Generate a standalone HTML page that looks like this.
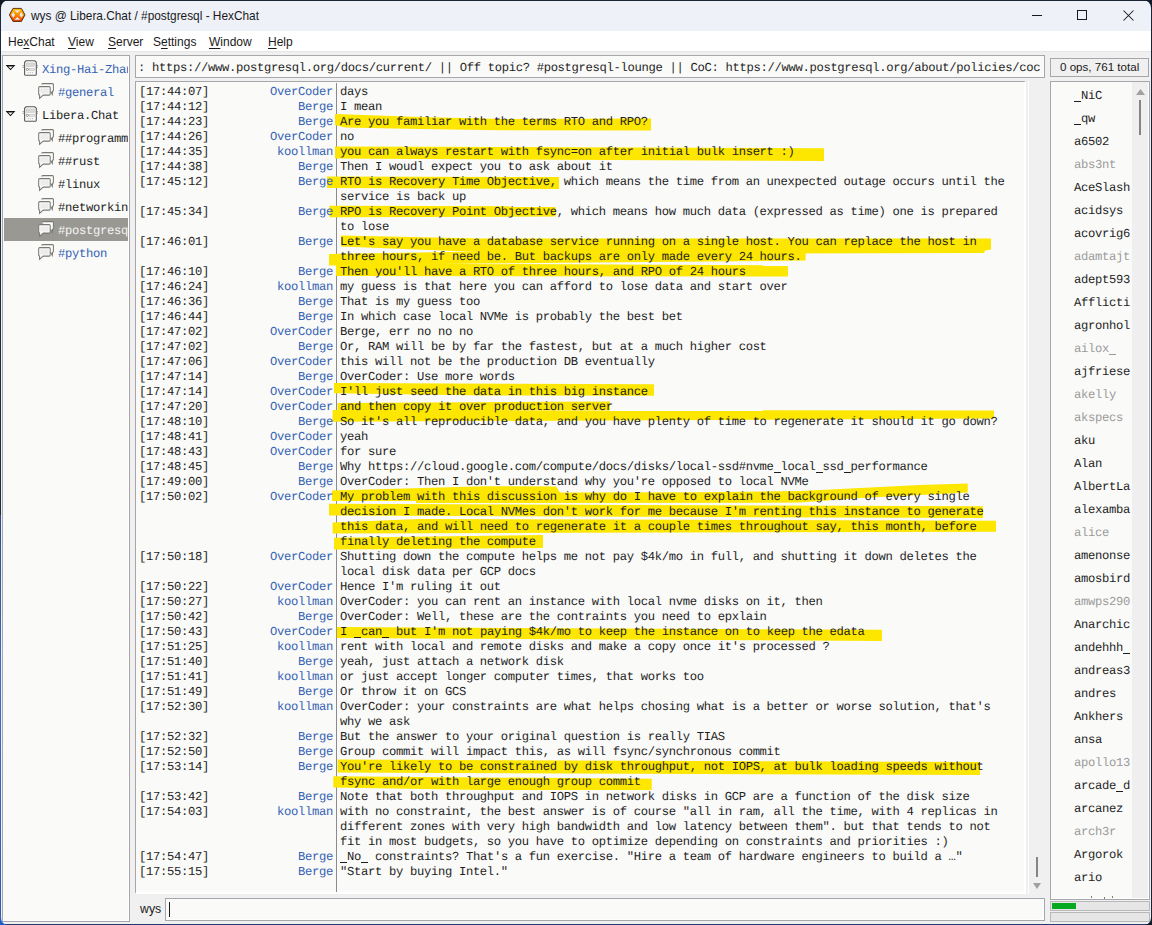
<!DOCTYPE html>
<html><head><meta charset="utf-8">
<style>
html,body{margin:0;padding:0;width:1152px;height:925px;overflow:hidden;background:linear-gradient(to bottom,#0f1826 0,#0f1826 700px,#1a4fb0 925px);}
*{box-sizing:border-box;}
#win{position:absolute;left:0;top:0;width:1152px;height:925px;background:#f0f0f0;overflow:hidden;}
#frame{position:absolute;left:0;top:0;width:1152px;height:925px;border:1px solid #1b2533;border-left-color:#1f2a40;border-bottom-color:#233a6e;pointer-events:none;}
.abs{position:absolute;}
#title{position:absolute;left:0;top:0;width:1152px;height:31px;background:#eef1f8;}
#title .t{position:absolute;left:31px;top:9px;font:11.85px "Liberation Sans",sans-serif;color:#1a1a1a;white-space:nowrap;}
#menu{position:absolute;left:0;top:31px;width:1152px;height:21px;background:#fff;border-bottom:1px solid #e6e6e6;}
#menu span{position:absolute;top:4px;font:12px "Liberation Sans",sans-serif;color:#1a1a1a;white-space:nowrap;}
#menu u{text-decoration:underline;text-decoration-thickness:1px;text-underline-offset:1.5px;}
.panel{position:absolute;background:#fafaf9;border:1px solid #a6a6ab;}
.mono{font-family:"Liberation Mono",monospace;}
.ts,.nk,.msg{position:absolute;height:15px;line-height:15px;white-space:pre;font-family:"Liberation Mono",monospace;font-size:12.2px;letter-spacing:-0.32px;text-rendering:geometricPrecision;color:#1e1e1e;}
.ts{left:139px;}
.nk{right:calc(1152px - 333px);color:#3562b2;text-align:right;}
.msg{left:340px;}
.un{position:absolute;left:23px;height:18px;line-height:18px;white-space:pre;font-family:"Liberation Mono",monospace;font-size:12.2px;letter-spacing:-0.32px;text-rendering:geometricPrecision;color:#1e1e1e;}
.un.aw{color:#9a9a9a;}
.tree{position:absolute;height:18px;line-height:18px;white-space:pre;font-family:"Liberation Mono",monospace;font-size:12.2px;letter-spacing:-0.32px;text-rendering:geometricPrecision;color:#1e1e1e;}
.hl{position:absolute;background:#fde600;}
.us{display:inline-block;width:7px;height:15px;vertical-align:top;background:linear-gradient(currentColor,currentColor) no-repeat 0 12px/7px 1px;}
.un .us{height:18px;background-position:0 14px;}
</style></head><body>
<svg width="0" height="0" style="position:absolute">
 <defs>
  <g id="srvicon">
   <path d="M6.1 1.8H14.8L16.3 3.3V15.6Q16.3 16.2 15.7 16.2H5.2Q4.6 16.2 4.6 15.6V3.3Z" fill="#fbfbfb" stroke="#5a5a5a" stroke-width="1.1"/>
   <rect x="6.4" y="4" width="8" height="3.3" fill="#d8d8d8" stroke="#c4c4c4" stroke-width="0.6"/>
   <circle cx="7.4" cy="10.4" r="1.1" fill="none" stroke="#777" stroke-width="0.8"/>
   <rect x="9.4" y="9.4" width="5" height="2" fill="#e2e2e2" stroke="#c0c0c0" stroke-width="0.6"/>
   <path d="M8.2 13.2V14.2M10.3 13.2V14.2M12.4 13.2V14.2" stroke="#aaa" stroke-width="0.9"/>
   <path d="M2.6 6.6H4.1M2.6 8.3H4.1M16.8 6.6H18M16.8 8.3H18" stroke="#777" stroke-width="0.7"/>
  </g>
  <g id="chicon">
   <path d="M5.7 2.6Q5.7 1.6 6.7 1.6H16.4Q17.4 1.6 17.4 2.6V8.2Q17.4 9.2 16.6 9.2L16.3 12.4L14.6 9.2" fill="#fdfdfd" stroke="#7a7a72" stroke-width="1.05"/>
   <path d="M2.7 5.6Q2.7 4.6 3.7 4.6H13.2Q14.2 4.6 14.2 5.6V12.1Q14.2 13.1 13.2 13.1H7.2L3.6 16.4L3.6 13.1Q2.7 13.1 2.7 12.1Z" fill="#fdfdfd" stroke="#7a7a72" stroke-width="1.05"/>
   <rect x="4.3" y="6.3" width="8.3" height="5.2" fill="#ececec"/>
  </g>
 </defs>
</svg>
<div id="win">
 <div id="title">
  <svg class="abs" style="left:8px;top:7px" width="18" height="16" viewBox="8 7 18 16">
   <defs><linearGradient id="og" x1="0" y1="0" x2="0" y2="1"><stop offset="0" stop-color="#ffc400"/><stop offset="0.45" stop-color="#ff9000"/><stop offset="1" stop-color="#f03800"/></linearGradient></defs>
   <polygon points="13,8.4 21.4,8.4 25,14.9 21.4,21.4 13,21.4 9.4,14.9" fill="url(#og)" stroke="#4a2200" stroke-width="0.9"/>
   <polygon points="14.3,10.2 20.3,10.2 17.3,13" fill="#e2e8f0"/>
   <polygon points="14.3,19.7 20.3,19.7 17.3,16.9" fill="#e2e8f0"/>
   <polygon points="11.3,14.9 13.4,12.1 15,14.9 13.4,17.7" fill="#e2e8f0"/>
   <polygon points="23.2,14.9 21.1,12.1 19.5,14.9 21.1,17.7" fill="#e2e8f0"/>
  </svg>
  <div class="t">wys @ Libera.Chat / #postgresql - HexChat</div>
  <!-- window controls -->
  <div class="abs" style="left:1032px;top:15px;width:10px;height:1px;background:#1a1a1a"></div>
  <div class="abs" style="left:1077px;top:10px;width:10px;height:10px;border:1px solid #1a1a1a"></div>
  <svg class="abs" style="left:1123px;top:10px" width="11" height="11" viewBox="0 0 11 11"><path d="M0.5 0.5L10.5 10.5M10.5 0.5L0.5 10.5" stroke="#1a1a1a" stroke-width="1.05"/></svg>
 </div>
 <div id="menu">
  <span style="left:8px">He<u>x</u>Chat</span>
  <span style="left:68px"><u>V</u>iew</span>
  <span style="left:108px"><u>S</u>erver</span>
  <span style="left:153px">S<u>e</u>ttings</span>
  <span style="left:209px"><u>W</u>indow</span>
  <span style="left:268px"><u>H</u>elp</span>
 </div>

 <!-- left tree -->
 <div class="abs" style="left:2px;top:55px;width:128px;height:867px;background:#fafaf9;border:1px solid #a6a6ab;"></div>
 <div class="abs" style="left:3px;top:56px;width:126px;height:865px;border-right:1px solid #fff;border-bottom:1px solid #fff;"></div>
 <div class="abs" style="left:3px;top:56px;width:125px;height:865px;overflow:hidden">
<svg class="abs" style="left:2px;top:7px" width="14" height="10" viewBox="0 0 14 10"><path d="M0.6 2.1H10.4L5.5 7.2ZM3.1 3.4L5.5 5.8L7.9 3.4Z" fill="#111" fill-rule="evenodd"/></svg>
<svg class="abs" style="left:17px;top:2.5px" width="20" height="18"><use href="#srvicon"/></svg>
<div class="tree" style="left:39px;top:5px;color:#3562b2">Xing-Hai-Zhan</div>
<svg class="abs" style="left:33px;top:26px" width="18" height="18"><use href="#chicon"/></svg>
<div class="tree" style="left:55px;top:28px;color:#3562b2">#general</div>
<svg class="abs" style="left:2px;top:53px" width="14" height="10" viewBox="0 0 14 10"><path d="M0.6 2.1H10.4L5.5 7.2ZM3.1 3.4L5.5 5.8L7.9 3.4Z" fill="#111" fill-rule="evenodd"/></svg>
<svg class="abs" style="left:17px;top:48.5px" width="20" height="18"><use href="#srvicon"/></svg>
<div class="tree" style="left:39px;top:51px;color:#1e1e1e">Libera.Chat</div>
<svg class="abs" style="left:33px;top:72px" width="18" height="18"><use href="#chicon"/></svg>
<div class="tree" style="left:55px;top:74px;color:#1e1e1e">##programming</div>
<svg class="abs" style="left:33px;top:95px" width="18" height="18"><use href="#chicon"/></svg>
<div class="tree" style="left:55px;top:97px;color:#1e1e1e">##rust</div>
<svg class="abs" style="left:33px;top:118px" width="18" height="18"><use href="#chicon"/></svg>
<div class="tree" style="left:55px;top:120px;color:#1e1e1e">#linux</div>
<svg class="abs" style="left:33px;top:141px" width="18" height="18"><use href="#chicon"/></svg>
<div class="tree" style="left:55px;top:143px;color:#1e1e1e">#networking</div>
<div class="abs" style="left:1px;top:162px;width:124px;height:23px;background:#9a9893"></div>
<svg class="abs" style="left:33px;top:164px" width="18" height="18"><use href="#chicon"/></svg>
<div class="tree" style="left:55px;top:166px;color:#f4f4f4">#postgresql</div>
<svg class="abs" style="left:33px;top:187px" width="18" height="18"><use href="#chicon"/></svg>
<div class="tree" style="left:55px;top:189px;color:#3562b2">#python</div>
</div>

 <!-- topic -->
 <div class="abs" style="left:135px;top:55px;width:910px;height:23px;background:#fafaf9;border:1px solid #a6a6ab;overflow:hidden">
  <div class="abs mono" style="left:2px;top:5px;white-space:pre;font-size:12.2px;letter-spacing:-0.32px;text-rendering:geometricPrecision;color:#1e1e1e;line-height:15px">: https://www.postgresql.org/docs/current/ || Off topic? #postgresql-lounge || CoC: https://www.postgresql.org/about/policies/coc</div>
 </div>
 <!-- ops -->
 <div class="abs" style="left:1050px;top:58px;width:99px;height:19px;background:#f0f0f0;border:1px solid #a6a6ab;"></div>
 <div class="abs" style="left:1060px;top:60px;font:11.6px 'Liberation Sans',sans-serif;color:#1a1a1a;white-space:nowrap">0 ops, 761 total</div>

 <!-- chat -->
 <div class="abs" style="left:135px;top:81px;width:891px;height:813px;background:#fafaf9;border-left:1px solid #a6a6ab;border-top:1px solid #a6a6ab;border-right:2px solid #fff;border-bottom:2px solid #fff;"></div>
 <div class="abs" style="left:1028px;top:81px;width:1px;height:813px;background:#fff"></div>
 <div class="abs" style="left:336px;top:83px;width:1px;height:809px;background:#8a8a90"></div>
 <svg class="abs" style="left:0;top:0" width="1152" height="925"><g fill="#fde600">
 <polygon points="335,114 420,117 500,119 651,118.4 651,130.5 500,130.3 420,129 345,127.5 335,125"/>
 <polygon points="335,146.4 824,148.3 824,161 335,158.5"/>
 <polygon points="327,176.5 559,177 559,189 327,188"/>
 <polygon points="329.5,205.8 555.5,206.3 555.5,216.5 329.5,217.3"/>
 <polygon points="341,235.6 480,238.4 991,238.6 991,249.6 985,250.5 984,253 700,253.5 480,252 341,246.5"/>
 <polygon points="329,254 480,251.5 805.6,249.6 805.6,260.6 480,263.5 329,265.5"/>
 <polygon points="336,263.4 788,265.3 788,276.6 336,276"/>
 <polygon points="334,382.9 654,384.25 654,395.8 485,395.4 334,393.3"/>
 <polygon points="337.5,403 610,401.6 610,410.5 337.5,411"/>
 <polygon points="332.6,410 994,410.5 994,418.6 332.6,421.7"/>
 <polygon points="332,490.5 485,486.3 556,486.5 560,492.5 700,492.3 800,491 860,488 920,485 967.7,483.5 967.7,492.6 930,494.5 860,498 800,502.6 416,503 416,501 332,501"/>
 <polygon points="329,503.7 983,506.3 983,518.1 329,515.5"/>
 <polygon points="332.6,522.4 420,519 996,520.8 996,531.8 560,532.7 332.6,533.5"/>
 <polygon points="334,537.7 543,535 543,548 334,549.5"/>
 <polygon points="336.8,627 882,629.8 882,641 336.8,638"/>
 <polygon points="337.5,759.6 980,762 980,775 337.5,772.5"/>
 <polygon points="333.3,776.3 651.7,778.7 651.7,790 485,790 333.3,787.4"/>
</g></svg>

 <div class="ts" style="top:85px">[17:44:07]</div>
<div class="nk" style="top:85px">OverCoder</div>
<div class="msg" style="top:85px">days</div>
<div class="ts" style="top:100px">[17:44:12]</div>
<div class="nk" style="top:100px">Berge</div>
<div class="msg" style="top:100px">I mean</div>
<div class="ts" style="top:115px">[17:44:23]</div>
<div class="nk" style="top:115px">Berge</div>
<div class="msg" style="top:115px">Are you familiar with the terms RTO and RPO?</div>
<div class="ts" style="top:130px">[17:44:26]</div>
<div class="nk" style="top:130px">OverCoder</div>
<div class="msg" style="top:130px">no</div>
<div class="ts" style="top:145px">[17:44:35]</div>
<div class="nk" style="top:145px">koollman</div>
<div class="msg" style="top:145px">you can always restart with fsync=on after initial bulk insert :)</div>
<div class="ts" style="top:160px">[17:44:38]</div>
<div class="nk" style="top:160px">Berge</div>
<div class="msg" style="top:160px">Then I woudl expect you to ask about it</div>
<div class="ts" style="top:175px">[17:45:12]</div>
<div class="nk" style="top:175px">Berge</div>
<div class="msg" style="top:175px">RTO is Recovery Time Objective, which means the time from an unexpected outage occurs until the</div>
<div class="msg" style="top:190px">service is back up</div>
<div class="ts" style="top:205px">[17:45:34]</div>
<div class="nk" style="top:205px">Berge</div>
<div class="msg" style="top:205px">RPO is Recovery Point Objective, which means how much data (expressed as time) one is prepared</div>
<div class="msg" style="top:220px">to lose</div>
<div class="ts" style="top:235px">[17:46:01]</div>
<div class="nk" style="top:235px">Berge</div>
<div class="msg" style="top:235px">Let's say you have a database service running on a single host. You can replace the host in</div>
<div class="msg" style="top:250px">three hours, if need be. But backups are only made every 24 hours.</div>
<div class="ts" style="top:265px">[17:46:10]</div>
<div class="nk" style="top:265px">Berge</div>
<div class="msg" style="top:265px">Then you'll have a RTO of three hours, and RPO of 24 hours</div>
<div class="ts" style="top:280px">[17:46:24]</div>
<div class="nk" style="top:280px">koollman</div>
<div class="msg" style="top:280px">my guess is that here you can afford to lose data and start over</div>
<div class="ts" style="top:295px">[17:46:36]</div>
<div class="nk" style="top:295px">Berge</div>
<div class="msg" style="top:295px">That is my guess too</div>
<div class="ts" style="top:310px">[17:46:44]</div>
<div class="nk" style="top:310px">Berge</div>
<div class="msg" style="top:310px">In which case local NVMe is probably the best bet</div>
<div class="ts" style="top:325px">[17:47:02]</div>
<div class="nk" style="top:325px">OverCoder</div>
<div class="msg" style="top:325px">Berge, err no no no</div>
<div class="ts" style="top:340px">[17:47:02]</div>
<div class="nk" style="top:340px">Berge</div>
<div class="msg" style="top:340px">Or, RAM will be by far the fastest, but at a much higher cost</div>
<div class="ts" style="top:355px">[17:47:06]</div>
<div class="nk" style="top:355px">OverCoder</div>
<div class="msg" style="top:355px">this will not be the production DB eventually</div>
<div class="ts" style="top:370px">[17:47:14]</div>
<div class="nk" style="top:370px">Berge</div>
<div class="msg" style="top:370px">OverCoder: Use more words</div>
<div class="ts" style="top:385px">[17:47:14]</div>
<div class="nk" style="top:385px">OverCoder</div>
<div class="msg" style="top:385px">I'll just seed the data in this big instance</div>
<div class="ts" style="top:400px">[17:47:20]</div>
<div class="nk" style="top:400px">OverCoder</div>
<div class="msg" style="top:400px">and then copy it over production server</div>
<div class="ts" style="top:415px">[17:48:10]</div>
<div class="nk" style="top:415px">Berge</div>
<div class="msg" style="top:415px">So it's all reproducible data, and you have plenty of time to regenerate it should it go down?</div>
<div class="ts" style="top:430px">[17:48:41]</div>
<div class="nk" style="top:430px">OverCoder</div>
<div class="msg" style="top:430px">yeah</div>
<div class="ts" style="top:445px">[17:48:43]</div>
<div class="nk" style="top:445px">OverCoder</div>
<div class="msg" style="top:445px">for sure</div>
<div class="ts" style="top:460px">[17:48:45]</div>
<div class="nk" style="top:460px">Berge</div>
<div class="msg" style="top:460px">Why https://cloud.google.com/compute/docs/disks/local-ssd#nvme<span class="us"></span>local<span class="us"></span>ssd<span class="us"></span>performance</div>
<div class="ts" style="top:475px">[17:49:00]</div>
<div class="nk" style="top:475px">Berge</div>
<div class="msg" style="top:475px">OverCoder: Then I don't understand why you're opposed to local NVMe</div>
<div class="ts" style="top:490px">[17:50:02]</div>
<div class="nk" style="top:490px">OverCoder</div>
<div class="msg" style="top:490px">My problem with this discussion is why do I have to explain the background of every single</div>
<div class="msg" style="top:505px">decision I made. Local NVMes don't work for me because I'm renting this instance to generate</div>
<div class="msg" style="top:520px">this data, and will need to regenerate it a couple times throughout say, this month, before</div>
<div class="msg" style="top:535px">finally deleting the compute</div>
<div class="ts" style="top:550px">[17:50:18]</div>
<div class="nk" style="top:550px">OverCoder</div>
<div class="msg" style="top:550px">Shutting down the compute helps me not pay $4k/mo in full, and shutting it down deletes the</div>
<div class="msg" style="top:565px">local disk data per GCP docs</div>
<div class="ts" style="top:580px">[17:50:22]</div>
<div class="nk" style="top:580px">OverCoder</div>
<div class="msg" style="top:580px">Hence I'm ruling it out</div>
<div class="ts" style="top:595px">[17:50:27]</div>
<div class="nk" style="top:595px">koollman</div>
<div class="msg" style="top:595px">OverCoder: you can rent an instance with local nvme disks on it, then</div>
<div class="ts" style="top:610px">[17:50:42]</div>
<div class="nk" style="top:610px">Berge</div>
<div class="msg" style="top:610px">OverCoder: Well, these are the contraints you need to epxlain</div>
<div class="ts" style="top:625px">[17:50:43]</div>
<div class="nk" style="top:625px">OverCoder</div>
<div class="msg" style="top:625px">I <span class="us"></span>can<span class="us"></span> but I'm not paying $4k/mo to keep the instance on to keep the edata</div>
<div class="ts" style="top:640px">[17:51:25]</div>
<div class="nk" style="top:640px">koollman</div>
<div class="msg" style="top:640px">rent with local and remote disks and make a copy once it's processed ?</div>
<div class="ts" style="top:655px">[17:51:40]</div>
<div class="nk" style="top:655px">Berge</div>
<div class="msg" style="top:655px">yeah, just attach a network disk</div>
<div class="ts" style="top:670px">[17:51:41]</div>
<div class="nk" style="top:670px">koollman</div>
<div class="msg" style="top:670px">or just accept longer computer times, that works too</div>
<div class="ts" style="top:685px">[17:51:49]</div>
<div class="nk" style="top:685px">Berge</div>
<div class="msg" style="top:685px">Or throw it on GCS</div>
<div class="ts" style="top:700px">[17:52:30]</div>
<div class="nk" style="top:700px">koollman</div>
<div class="msg" style="top:700px">OverCoder: your constraints are what helps chosing what is a better or worse solution, that's</div>
<div class="msg" style="top:715px">why we ask</div>
<div class="ts" style="top:730px">[17:52:32]</div>
<div class="nk" style="top:730px">Berge</div>
<div class="msg" style="top:730px">But the answer to your original question is really TIAS</div>
<div class="ts" style="top:745px">[17:52:50]</div>
<div class="nk" style="top:745px">Berge</div>
<div class="msg" style="top:745px">Group commit will impact this, as will fsync/synchronous commit</div>
<div class="ts" style="top:760px">[17:53:14]</div>
<div class="nk" style="top:760px">Berge</div>
<div class="msg" style="top:760px">You're likely to be constrained by disk throughput, not IOPS, at bulk loading speeds without</div>
<div class="msg" style="top:775px">fsync and/or with large enough group commit</div>
<div class="ts" style="top:790px">[17:53:42]</div>
<div class="nk" style="top:790px">Berge</div>
<div class="msg" style="top:790px">Note that both throughput and IOPS in network disks in GCP are a function of the disk size</div>
<div class="ts" style="top:805px">[17:54:03]</div>
<div class="nk" style="top:805px">koollman</div>
<div class="msg" style="top:805px">with no constraint, the best answer is of course "all in ram, all the time, with 4 replicas in</div>
<div class="msg" style="top:820px">different zones with very high bandwidth and low latency between them". but that tends to not</div>
<div class="msg" style="top:835px">fit in most budgets, so you have to optimize depending on constraints and priorities :)</div>
<div class="ts" style="top:850px">[17:54:47]</div>
<div class="nk" style="top:850px">Berge</div>
<div class="msg" style="top:850px"><span class="us"></span>No<span class="us"></span> constraints? That's a fun exercise. "Hire a team of hardware engineers to build a …"</div>
<div class="ts" style="top:865px">[17:55:15]</div>
<div class="nk" style="top:865px">Berge</div>
<div class="msg" style="top:865px">"Start by buying Intel."</div>
 <!-- chat scrollbar -->
 <div class="abs" style="left:1036px;top:857px;width:2px;height:20px;background:#858585"></div>
 <svg class="abs" style="left:1033px;top:883px" width="8" height="6"><polygon points="0,0 8,0 4,6" fill="#a0a0a0"/></svg>

 <!-- userlist -->
 <div class="abs" style="left:1050px;top:81px;width:100px;height:819px;background:#fafaf9;border:1px solid #a6a6ab;"></div>
 <div class="abs" style="left:1051px;top:82px;width:98px;height:817px;border-right:1px solid #fff;border-bottom:1px solid #fff;"></div>
 <div class="abs" style="left:1132px;top:82px;width:16px;height:816px;background:#efefef"></div>
 <svg class="abs" style="left:1135.5px;top:89px" width="9" height="6"><polygon points="0,6 9,6 4.5,0" fill="#a0a0a0"/></svg>
 <div class="abs" style="left:1139px;top:100px;width:2px;height:35px;background:#858585"></div>
 <div class="abs" style="left:1051px;top:82px;width:81px;height:816px;overflow:hidden">
 <div class="un" style="top:5px"><span class="us"></span>NiC</div>
<div class="un" style="top:28px"><span class="us"></span>qw</div>
<div class="un" style="top:51px">a6502</div>
<div class="un aw" style="top:74px">abs3nt</div>
<div class="un" style="top:97px">AceSlash</div>
<div class="un" style="top:120px">acidsys</div>
<div class="un" style="top:143px">acovrig6</div>
<div class="un aw" style="top:166px">adamtajt</div>
<div class="un" style="top:189px">adept593</div>
<div class="un" style="top:212px">Afflicti</div>
<div class="un" style="top:235px">agronhol</div>
<div class="un aw" style="top:258px">ailox<span class="us"></span></div>
<div class="un" style="top:281px">ajfriese</div>
<div class="un aw" style="top:304px">akelly</div>
<div class="un aw" style="top:327px">akspecs</div>
<div class="un" style="top:350px">aku</div>
<div class="un" style="top:373px">Alan</div>
<div class="un" style="top:396px">AlbertLa</div>
<div class="un" style="top:419px">alexamba</div>
<div class="un aw" style="top:442px">alice</div>
<div class="un" style="top:465px">amenonse</div>
<div class="un" style="top:488px">amosbird</div>
<div class="un aw" style="top:511px">amwps290</div>
<div class="un" style="top:534px">Anarchic</div>
<div class="un" style="top:557px">andehhh<span class="us"></span></div>
<div class="un" style="top:580px">andreas3</div>
<div class="un" style="top:603px">andres</div>
<div class="un" style="top:626px">Ankhers</div>
<div class="un" style="top:649px">ansa</div>
<div class="un aw" style="top:672px">apollo13</div>
<div class="un" style="top:695px">arcade<span class="us"></span>d</div>
<div class="un" style="top:718px">arcanez</div>
<div class="un aw" style="top:741px">arch3r</div>
<div class="un" style="top:764px">Argorok</div>
<div class="un" style="top:787px">ario</div>
 </div>
 <div class="abs" style="left:1091px;top:896px;width:1px;height:2px;background:#8a7a70"></div>
 <div class="abs" style="left:1104px;top:897px;width:1px;height:2px;background:#8a7a70"></div>
 <div class="abs" style="left:1112px;top:896px;width:1px;height:2px;background:#8a7a70"></div>

 <!-- input -->
 <div class="abs" style="left:140px;top:902px;font:12.3px 'Liberation Sans',sans-serif;color:#1a1a1a">wys</div>
 <div class="abs" style="left:165px;top:898px;width:880px;height:23px;background:#fafaf9;border:1px solid #a6a6ab;"></div>
 <div class="abs" style="left:166px;top:899px;width:878px;height:21px;border-right:1px solid #fff;border-bottom:1px solid #fff;"></div>
 <div class="abs" style="left:169px;top:902px;width:1px;height:15px;background:#1a1a1a"></div>

 <!-- lag / throttle -->
 <div class="abs" style="left:1050px;top:901px;width:100px;height:10px;background:#e6e6e6;border:1px solid #b8b8b8"></div>
 <div class="abs" style="left:1052px;top:903px;width:24px;height:6px;background:#06a922"></div>
 <div class="abs" style="left:1050px;top:912px;width:100px;height:10px;background:#e6e6e6;border:1px solid #b8b8b8"></div>
 <div id="frame"></div>
<svg class="abs" style="left:0;top:0" width="1152" height="925">
 <path d="M0 0H9A8 8 0 0 0 1 8V9H0Z" fill="#111a28"/>
 <path d="M1152 0H1143A8 8 0 0 1 1151 8V9H1152Z" fill="#111a28"/>
 <path d="M0 925H8A7 7 0 0 1 1 918V917H0Z" fill="#1d5fcc"/>
 <path d="M1152 925H1144A7 7 0 0 0 1151 918V917H1152Z" fill="#111a28"/>
</svg>
<div class="abs" style="left:0;top:515px;width:1px;height:404px;background:linear-gradient(to bottom,#2a4a8a 0,#3b6cc4 40%,#2d5bb0 100%)"></div>
</div>
</body></html>
